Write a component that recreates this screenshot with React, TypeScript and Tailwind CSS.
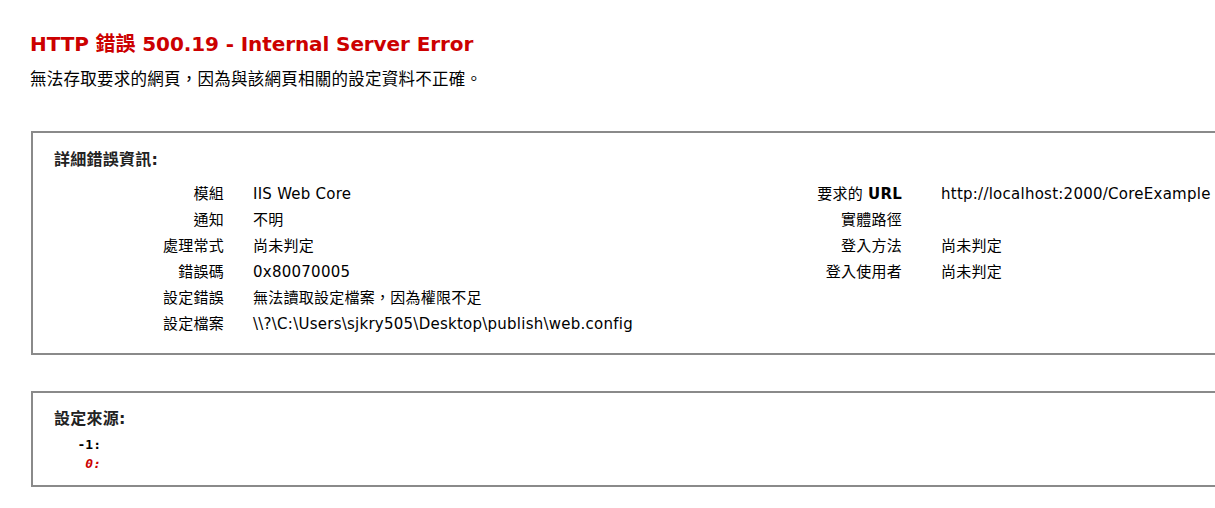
const sans = "font-['DejaVu_Sans','Noto_Sans_CJK_TC',sans-serif]";

const left: [string, string][] = [
  ["模組", "IIS Web Core"],
  ["通知", "不明"],
  ["處理常式", "尚未判定"],
  ["錯誤碼", "0x80070005"],
  ["設定錯誤", "無法讀取設定檔案，因為權限不足"],
  ["設定檔案", "\\\\?\\C:\\Users\\sjkry505\\Desktop\\publish\\web.config"],
];

const right: [React.ReactNode, string][] = [
  [
    <>
      要求的 <b className="font-bold">URL</b>
    </>,
    "http://localhost:2000/CoreExample",
  ],
  ["實體路徑", ""],
  ["登入方法", "尚未判定"],
  ["登入使用者", "尚未判定"],
];

export default function App() {
  return (
    <div className={`w-[1215px] h-[508px] overflow-hidden bg-white text-black text-[15px] tracking-[0.25px] ${sans}`}>
      <div className="pl-[30px] pt-[32px]">
        <h3 className="text-[20px] leading-[24px] font-bold text-[#cc0000] tracking-[-0.1px]">
          HTTP 錯誤 500.19 - Internal Server Error
        </h3>
        <p className="mt-[14px] text-[16.5px] leading-[20px]">無法存取要求的網頁，因為與該網頁相關的設定資料不正確。</p>
      </div>

      <div className="ml-[31px] mt-[41px] w-[1400px] border-2 border-[#8a8a8a] pt-[18px] pb-[16px] pl-[21px]">
        <div className="text-[16px] leading-[17px] font-bold text-[#222]">詳細錯誤資訊:</div>
        <div className="mt-[13px] flex">
          <div className="w-[579px] shrink-0 -ml-[21px]">
            {left.map(([k, v]) => (
              <div key={k} className="flex leading-[26px] h-[26px]">
                <div className="w-[191px] shrink-0 text-right">{k}</div>
                <div className="ml-[29px] whitespace-nowrap">{v}</div>
              </div>
            ))}
          </div>
          <div>
            {right.map(([k, v], i) => (
              <div key={i} className="flex leading-[26px] h-[26px]">
                <div className="w-[290px] shrink-0 text-right">{k}</div>
                <div className="ml-[39px] whitespace-nowrap">{v}</div>
              </div>
            ))}
          </div>
        </div>
      </div>

      <div className="ml-[31px] mt-[36px] w-[1400px] border-2 border-[#8a8a8a] pt-[17px] pb-[12px] pl-[21px]">
        <div className="text-[16px] leading-[17px] font-bold text-[#222]">設定來源:</div>
        <pre className="mt-[8px] font-['DejaVu_Sans_Mono',monospace] text-[13px] leading-[19px] font-bold tracking-normal">
          {"   -1: \n"}
          <span className="text-[#cc0000] italic">{"    0: "}</span>
        </pre>
      </div>
    </div>
  );
}
